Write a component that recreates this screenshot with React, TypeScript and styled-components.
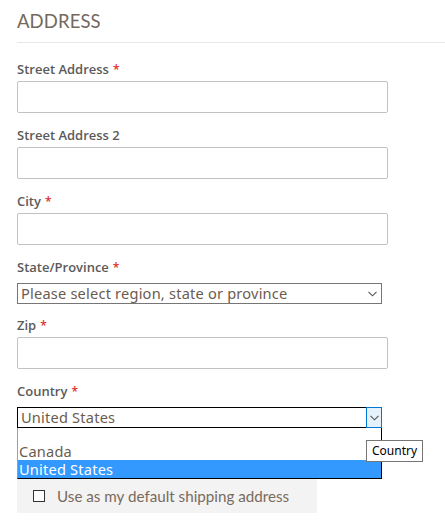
import React from "react";
import styled, { createGlobalStyle } from "styled-components";

const Global = createGlobalStyle`
  html, body { margin: 0; padding: 0; background: #fff; }
  body { font-family: "Open Sans", "Liberation Sans", sans-serif; }
  * { box-sizing: border-box; }
`;

const Page = styled.div`
  padding: 8px 0 0 17px;
  width: 445px;
`;

const Title = styled.h2`
  margin: 0;
  font-family: "Lato", "Open Sans", sans-serif;
  font-weight: 400;
  font-size: 18.5px;
  letter-spacing: 0.1px;
  color: #75685e;
  line-height: 26px;
  padding-bottom: 8px;
  border-bottom: 1px solid #e8e8e8;
`;

const Fields = styled.div`
  display: flex;
  flex-direction: column;
  padding-top: 18px;
`;

const Field = styled.div<{ $gap?: number }>`
  display: flex;
  flex-direction: column;
  margin-bottom: ${(p) => p.$gap ?? 14}px;
`;

const Label = styled.label<{ $mb?: number }>`
  display: block;
  height: 16px;
  font-family: "Open Sans", sans-serif;
  font-weight: 600;
  font-size: 13px;
  color: #5a5a5a;
  line-height: 16px;
  margin-bottom: ${(p) => p.$mb ?? 4}px;
`;

const Star = styled.span`
  color: #e02b27;
  font-size: 12px;
  line-height: 0;
  margin-left: 4px;
`;

const Input = styled.div`
  width: 371px;
  height: 32px;
  flex: none;
  border: 1px solid #c2c2c2;
  border-radius: 2px;
  background: #fff;
`;

const Select = styled.div<{ $focused?: boolean }>`
  position: relative;
  width: 365px;
  height: 21px;
  flex: none;
  border: 1px solid ${(p) => (p.$focused ? "#000" : "#767676")};
  background: #fff;
  display: flex;
  align-items: center;
  justify-content: space-between;
  font-family: "Noto Sans", "Open Sans", sans-serif;
  font-size: 14.6px;
  color: #6b5b4f;
  padding-left: 3px;
`;

const SelectText = styled.span`
  line-height: 19px;
  letter-spacing: 0.2px;
`;

const Arrow = styled.div<{ $active?: boolean }>`
  width: ${(p) => (p.$active ? 16 : 17)}px;
  height: ${(p) => (p.$active ? 21 : 19)}px;
  margin: ${(p) => (p.$active ? "-1px -1px -1px 0" : "0")};
  display: flex;
  align-items: center;
  justify-content: center;
  background: ${(p) => (p.$active ? "#e5f1fb" : "transparent")};
  border: ${(p) => (p.$active ? "1px solid #0078d7" : "none")};
`;

const Dropdown = styled.div`
  position: absolute;
  left: -1px;
  top: 20px;
  width: 365px;
  background: #fff;
  border-left: 1px solid #a0a0a0;
  border-right: 1px solid #000;
  border-bottom: 1px solid #000;
  z-index: 2;
`;

const Option = styled.div<{ $selected?: boolean; $h?: number }>`
  height: ${(p) => p.$h ?? 17}px;
  line-height: ${(p) => p.$h ?? 17}px;
  font-family: "Noto Sans", "Open Sans", sans-serif;
  font-size: 14.6px;
  letter-spacing: 0.2px;
  padding-left: 1px;
  color: ${(p) => (p.$selected ? "#fff" : "#6b5b4f")};
  background: ${(p) => (p.$selected ? "#3399ff" : "#fff")};
`;

const Tooltip = styled.div`
  position: absolute;
  left: 348px;
  top: 32px;
  padding: 0 5px;
  height: 22px;
  line-height: 20px;
  border: 1px solid #767676;
  background: #fff;
  font-family: "Noto Sans", "Open Sans", sans-serif;
  font-size: 12px;
  color: #000;
  z-index: 3;
`;

const DefaultBox = styled.div`
  width: 300px;
  height: 34px;
  margin-top: 51px;
  background: #f3f3f3;
  display: flex;
  align-items: center;
  padding-left: 16px;
  gap: 12px;
`;

const Check = styled.span`
  width: 12px;
  height: 12px;
  border: 1px solid #333;
  background: #fff;
  flex: none;
`;

const CheckText = styled.span`
  font-family: "Lato", "Open Sans", sans-serif;
  font-size: 15.2px;
  color: #7a6a5e;
`;

const Chevron = () => (
  <svg width="9" height="6" viewBox="0 0 9 6">
    <path d="M0.5 0.8 L4.5 4.8 L8.5 0.8" fill="none" stroke="#555" strokeWidth="1.1" />
  </svg>
);

export default function App() {
  return (
    <>
      <Global />
      <Page>
        <Title>ADDRESS</Title>
        <Fields>
          <Field>
            <Label>Street Address<Star>*</Star></Label>
            <Input />
          </Field>
          <Field>
            <Label>Street Address 2</Label>
            <Input />
          </Field>
          <Field>
            <Label>City<Star>*</Star></Label>
            <Input />
          </Field>
          <Field $gap={13}>
            <Label $mb={8}>State/Province<Star>*</Star></Label>
            <Select>
              <SelectText>Please select region, state or province</SelectText>
              <Arrow><Chevron /></Arrow>
            </Select>
          </Field>
          <Field>
            <Label>Zip<Star>*</Star></Label>
            <Input />
          </Field>
          <Field $gap={0}>
            <Label $mb={8}>Country<Star>*</Star></Label>
            <Select $focused>
              <SelectText>United States</SelectText>
              <Arrow $active><Chevron /></Arrow>
              <Dropdown>
                <Option $h={15} />
                <Option>Canada</Option>
                <Option $selected $h={18}>United States</Option>
              </Dropdown>
              <Tooltip>Country</Tooltip>
            </Select>
          </Field>
          <DefaultBox>
            <Check />
            <CheckText>Use as my default shipping address</CheckText>
          </DefaultBox>
        </Fields>
      </Page>
    </>
  );
}
